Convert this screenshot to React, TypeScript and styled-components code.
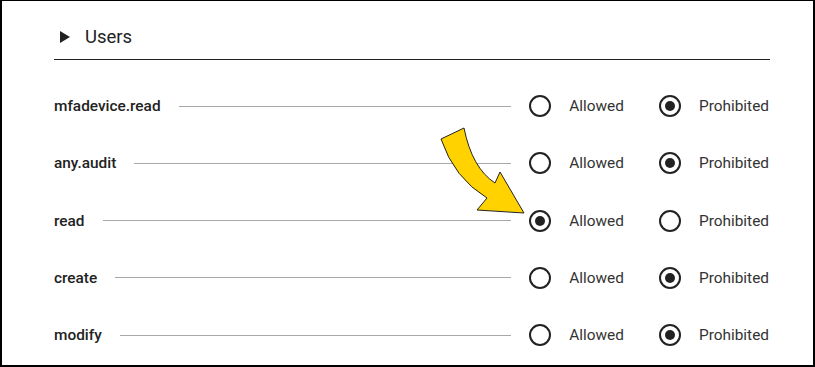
import React from "react";
import styled, { createGlobalStyle } from "styled-components";

const Global = createGlobalStyle`
  html, body { margin: 0; padding: 0; background: #fff; }
  body { font-family: Roboto, "Liberation Sans", sans-serif; }
`;

const Frame = styled.div`
  position: relative;
  width: 815px;
  height: 367px;
  box-sizing: border-box;
  border: 2px solid #000;
  border-top-width: 1px;
  padding: 0 44px 0 52px;
  background: #fff;
  overflow: hidden;
`;

const Header = styled.div`
  height: 59px;
  box-sizing: border-box;
  padding: 14px 0 0 6px;
  display: flex;
  align-items: center;
  gap: 15px;
  border-bottom: 1px solid #222;
  margin-right: -1px;
`;

const Title = styled.span`
  font-size: 18.5px;
  color: #222;
  line-height: 1;
`;

const Rows = styled.div`
  margin-top: 17.5px;
`;

const Row = styled.div`
  height: 57.25px;
  display: flex;
  align-items: center;
`;

const Label = styled.span`
  font-size: 15.4px;
  font-weight: 500;
  color: #222;
  white-space: nowrap;
`;

const Rule = styled.div`
  flex: 1;
  height: 1px;
  background: #a8a8a8;
  margin: 0 18px;
`;

const Option = styled.label<{ $first?: boolean }>`
  display: flex;
  align-items: center;
  gap: 18px;
  margin-left: ${(p) => (p.$first ? "0" : "35px")};
  font-size: 15.4px;
  color: #333;
`;

const Radio = styled.span<{ $checked: boolean }>`
  width: 22px;
  height: 22px;
  box-sizing: border-box;
  border: 2px solid #222;
  border-radius: 50%;
  display: flex;
  align-items: center;
  justify-content: center;
  &::after {
    content: "";
    width: 10px;
    height: 10px;
    border-radius: 50%;
    background: #222;
    display: ${(p) => (p.$checked ? "block" : "none")};
  }
`;

const Overlay = styled.svg`
  position: absolute;
  left: -2px;
  top: -1px;
  width: 815px;
  height: 367px;
  pointer-events: none;
`;

const rows: { name: string; allowed: boolean }[] = [
  { name: "mfadevice.read", allowed: false },
  { name: "any.audit", allowed: false },
  { name: "read", allowed: true },
  { name: "create", allowed: false },
  { name: "modify", allowed: false },
];

export default function App() {
  return (
    <>
      <Global />
      <Frame>
        <Header>
          <svg width="10" height="12" viewBox="0 0 10 12">
            <polygon points="0,0 10,6 0,12" fill="#222" />
          </svg>
          <Title>Users</Title>
        </Header>
        <Rows>
          {rows.map((r) => (
            <Row key={r.name}>
              <Label>{r.name}</Label>
              <Rule />
              <Option $first>
                <Radio $checked={r.allowed} />
                Allowed
              </Option>
              <Option>
                <Radio $checked={!r.allowed} />
                Prohibited
              </Option>
            </Row>
          ))}
        </Rows>
        <Overlay viewBox="0 0 815 367">
          <path
            d="M 441 139 L 464 128 Q 472 168 495 183 L 500 172 L 524 213 L 477 210 L 487 198 Q 454 178 441 139 Z"
            fill="#FFD200"
            stroke="#222"
            strokeWidth="1"
            strokeLinejoin="miter"
          />
        </Overlay>
      </Frame>
    </>
  );
}
